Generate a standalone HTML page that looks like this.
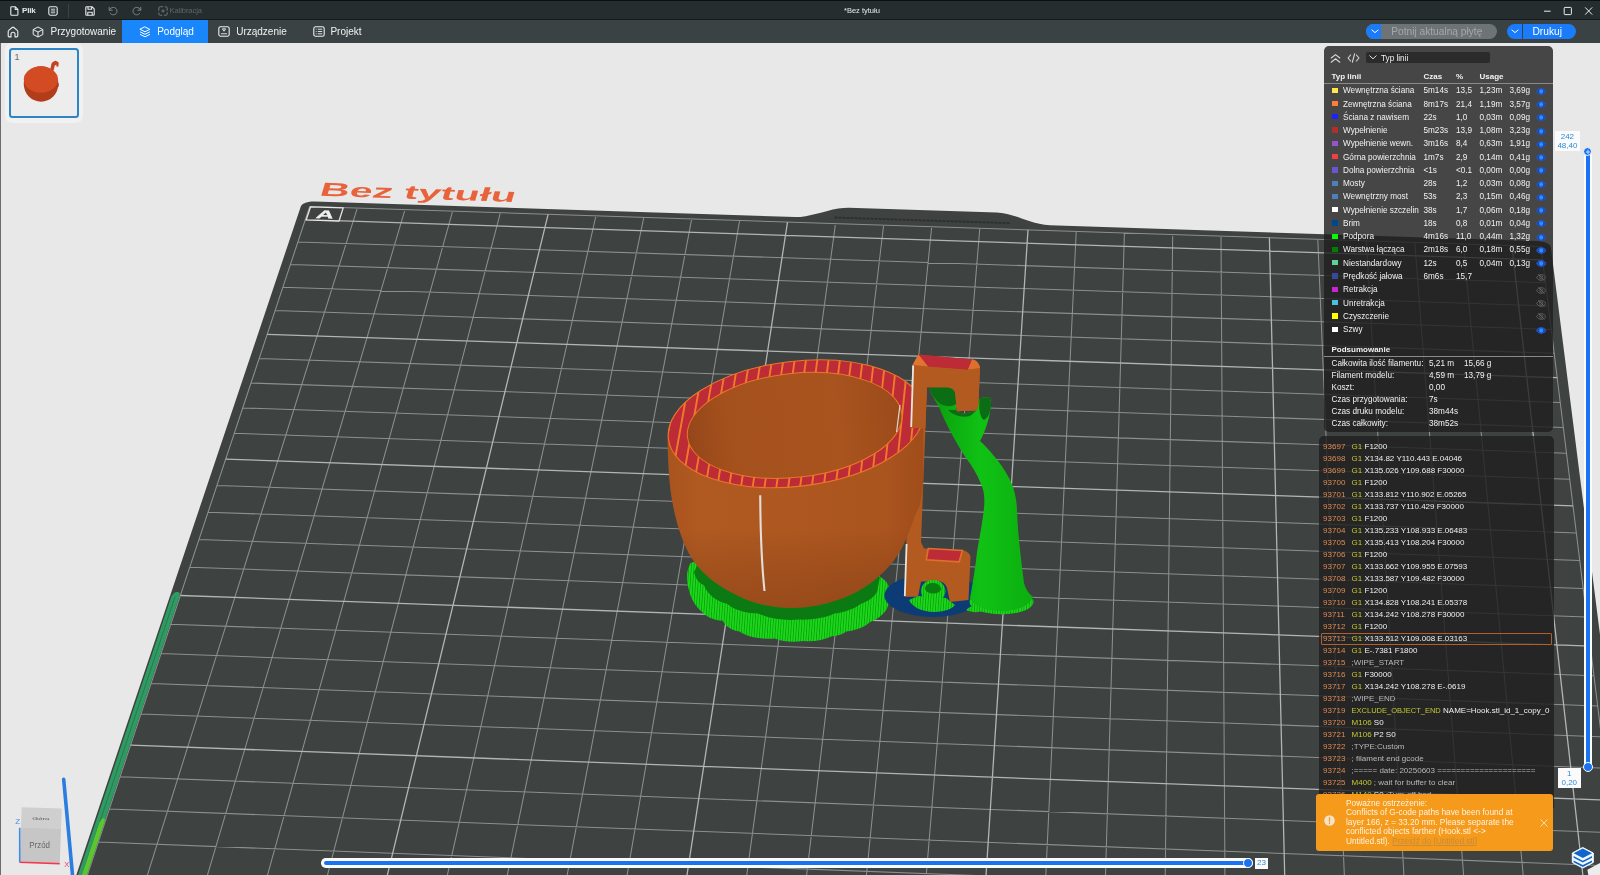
<!DOCTYPE html>
<html lang="pl"><head><meta charset="utf-8"><title>Bez tytułu</title>
<style>
*{box-sizing:border-box}
html,body{margin:0;padding:0}
body{-webkit-font-smoothing:antialiased;width:1600px;height:875px;overflow:hidden;position:relative;background:#e8e8e8;font-family:"Liberation Sans","DejaVu Sans",sans-serif;color:#fff}
#titlebar{position:absolute;left:0;top:0;width:1600px;height:20px;background:#262d2f;border-top:1px solid #0c1012;border-bottom:1px solid #13191b}
#tabbar{position:absolute;left:0;top:20px;width:1600px;height:22.6px;background:#3b4244}
#scene{position:absolute;left:0;top:42px}
.abs{position:absolute}
.tb-t{position:absolute;top:5px;font-size:8px;line-height:10px;color:#e8eaeb;white-space:nowrap}
.tab-t{position:absolute;top:6px;font-size:10px;line-height:12px;color:#f1f2f2;white-space:nowrap}

#legend{position:absolute;left:1324.2px;top:45.7px;width:229.3px;height:385.5px;background:rgba(30,30,30,0.805);border-radius:5px;overflow:hidden}
#legend .lt{position:absolute;font-size:8.2px;line-height:11px;color:#f2f2f2;white-space:nowrap}
#legend .lt.b{font-weight:bold;font-size:8px}
#legend .sw{left:8px;width:5.6px;height:5.4px}
#legend .eye{display:block;width:10.4px;height:7px}
#gcode{position:absolute;left:1318.5px;top:436.2px;width:234.7px;height:375px;background:rgba(30,30,30,0.805);border-radius:5px;overflow:hidden}
#gcode .gl{position:absolute;left:1.6px;width:231px;height:12px;font-size:8px;line-height:12px;white-space:pre;color:#f0f0f0;padding-left:2.5px}
#gcode .gl.hl{border:1px solid #b0602c;line-height:10px;padding-left:1.5px;border-radius:1px}
#gcode .gn{display:inline-block;width:28.5px;color:#e08a52}
#gcode .gc{color:#c4c832}
#gcode .gx{font-size:7.5px}
#gcode .ga{color:#f0f0f0}
#gcode .gm{color:#b8b8b8}
#warn{position:absolute;left:1316px;top:794px;width:237px;height:57px;background:#f59a1a;border-radius:3px}
#warn .wt{position:absolute;left:30px;top:4.5px;font-size:8.3px;line-height:9.5px;color:#fff3df;white-space:nowrap}
#warn .wt u{color:#c58b3e}
.sl{background:#fbfbfb;color:#2b8ad6;font-size:8px;line-height:9.8px;text-align:center;white-space:nowrap;padding-top:0.5px}
#titlebar,#tabbar,#legend,#gcode,#warn,.sl{will-change:transform}
</style></head>
<body>
<div id="titlebar">
<svg class="abs" style="left:10px;top:4.5px" width="9" height="10" viewBox="0 0 9 10"><path d="M1.6 0.8H5.4L7.9 3.3V8.4Q7.9 9.2 7.1 9.2H1.6Q0.8 9.2 0.8 8.4V1.6Q0.8 0.8 1.6 0.8ZM5.2 0.9V3.5H7.8" fill="none" stroke="#e9ebec" stroke-width="1.1" stroke-linejoin="round"/></svg>
<span class="tb-t" style="left:22px;font-weight:bold;letter-spacing:-0.2px">Plik</span>
<svg class="abs" style="left:47.6px;top:5px" width="10" height="10" viewBox="0 0 10 10"><rect x="0.8" y="0.8" width="8.4" height="8.4" rx="1.6" fill="none" stroke="#e9ebec" stroke-width="1.1"/><path d="M2.8 3.2H7.2M2.8 5H7.2M2.8 6.8H7.2" stroke="#e9ebec" stroke-width="0.9"/></svg>
<div class="abs" style="left:67.5px;top:3px;width:1px;height:14px;background:#3c4245"></div>
<svg class="abs" style="left:84.5px;top:5px" width="10" height="10" viewBox="0 0 10 10"><path d="M1.6 0.8H7.2L9.2 2.8V8.4Q9.2 9.2 8.4 9.2H1.6Q0.8 9.2 0.8 8.4V1.6Q0.8 0.8 1.6 0.8ZM3 0.9V3.3H6.6V0.9M2.8 9V6.2H7.2V9" fill="none" stroke="#e9ebec" stroke-width="1.1" stroke-linejoin="round"/></svg>
<svg class="abs" style="left:108px;top:4.5px" width="10" height="10" viewBox="0 0 10 10"><path d="M1.2 1.2V4.2H4.2M1.5 4C2.2 2.3 3.6 1.4 5.3 1.4C7.5 1.4 9 3 9 5.1C9 7.200000000000001 7.4 8.8 5.3 8.8C4 8.8 2.9 8.2 2.2 7.2" fill="none" stroke="#7c8387" stroke-width="1" stroke-linecap="round" stroke-linejoin="round"/></svg>
<svg class="abs" style="left:132px;top:4.5px" width="10" height="10" viewBox="0 0 10 10"><path d="M8.8 1.2V4.2H5.8M8.5 4C7.8 2.3 6.4 1.4 4.7 1.4C2.5 1.4 1 3 1 5.1C1 7.2 2.6 8.8 4.7 8.8C6 8.8 7.1 8.2 7.8 7.2" fill="none" stroke="#7c8387" stroke-width="1" stroke-linecap="round" stroke-linejoin="round"/></svg>
<svg class="abs" style="left:157.5px;top:5px" width="10" height="10" viewBox="0 0 10 10"><rect x="0.8" y="0.8" width="8.4" height="8.4" rx="1.8" fill="none" stroke="#6a7175" stroke-width="1.1" stroke-dasharray="5.2 1.6" stroke-dashoffset="2.6"/><path d="M3.2 5H6.8M5 3.2V6.8" stroke="#6a7175" stroke-width="1"/></svg>
<span class="tb-t" style="left:169.5px;color:#5f666a;font-size:7.6px;letter-spacing:-0.1px">Kalibracja</span>
<span class="tb-t" style="left:844px;font-size:7.5px">*Bez tytułu</span>
<svg class="abs" style="left:1543px;top:5px" width="50" height="10" viewBox="0 0 50 10"><path d="M1 5.2H7.6" stroke="#eceeef" stroke-width="1"/><rect x="21.2" y="1.4" width="7.2" height="7.2" rx="0.8" fill="none" stroke="#eceeef" stroke-width="1"/><path d="M42.2 1.4L49.2 8.6M49.2 1.4L42.2 8.6" stroke="#eceeef" stroke-width="1"/></svg>
</div>
<div id="tabbar">
<div class="abs" style="left:122.4px;top:0;width:86px;height:22.5px;background:#1a86fb"></div>
<svg class="abs" style="left:7px;top:5.8px" width="12" height="12" viewBox="0 0 12 12"><path d="M1.2 5.6C1.2 5 1.5 4.5 2 4.1L5.2 1.5C5.7 1.1 6.3 1.1 6.8 1.5L10 4.1C10.500000000000002 4.5 10.8 5 10.8 5.6V9.7C10.8 10.399999999999999 10.3 10.9 9.6 10.9H8V8.2C8 7.1 7.1 6.2 6 6.2S4 7.1 4 8.2V10.9H2.4C1.7 10.9 1.2 10.4 1.2 9.7Z" fill="none" stroke="#eef0f0" stroke-width="1.1" stroke-linejoin="round"/></svg>
<svg class="abs" style="left:32.2px;top:5.8px" width="12" height="12" viewBox="0 0 12 12"><path d="M6 1L10.8 3.5V8.5L6 11L1.2 8.5V3.5ZM1.3 3.6L6 6.1L10.7 3.6M6 6.1V11" fill="none" stroke="#eef0f0" stroke-width="1" stroke-linejoin="round"/></svg>
<span class="tab-t" style="left:50.6px">Przygotowanie</span>
<svg class="abs" style="left:138.6px;top:5.8px" width="12" height="12" viewBox="0 0 12 12"><path d="M6 1L10.8 3.4L6 5.8L1.2 3.4ZM1.4 6L6 8.3L10.6 6M1.4 8.5L6 10.8L10.6 8.5" fill="none" stroke="#fff" stroke-width="1" stroke-linejoin="round" stroke-linecap="round"/></svg>
<span class="tab-t" style="left:157.2px;color:#fff">Podgląd</span>
<svg class="abs" style="left:218px;top:6.3px" width="12" height="11" viewBox="0 0 12 11"><rect x="0.8" y="0.8" width="10.4" height="9.4" rx="1.6" fill="none" stroke="#eef0f0" stroke-width="1.1"/><path d="M3 7.8H9M4.4 2.8H7.6L6 5.2Z" fill="none" stroke="#eef0f0" stroke-width="0.9" stroke-linejoin="round"/></svg>
<span class="tab-t" style="left:236.2px">Urządzenie</span>
<svg class="abs" style="left:312.5px;top:6.3px" width="12" height="11" viewBox="0 0 12 11"><rect x="0.8" y="0.8" width="10.4" height="9.4" rx="1.8" fill="none" stroke="#eef0f0" stroke-width="1.1"/><path d="M2.8 3.2H3.6M2.8 5.5H3.6M2.8 7.8H3.6M4.8 3.2H9.2M4.8 5.5H9.2M4.8 7.8H9.2" stroke="#eef0f0" stroke-width="0.9"/></svg>
<span class="tab-t" style="left:330.4px">Projekt</span>
<!-- slice -->
<div class="abs" style="left:1366.2px;top:4.4px;width:131px;height:15px;background:#6d7376;border-radius:7.5px"></div>
<div class="abs" style="left:1366.2px;top:4.4px;width:15px;height:15px;background:#1a7cfa;border-radius:7.5px 0 0 7.5px"></div>
<svg class="abs" style="left:1370.5px;top:9.4px" width="8" height="5" viewBox="0 0 8 5"><path d="M0.9 1L4 3.6L7.1 1" fill="none" stroke="#fff" stroke-width="1" stroke-linecap="round" stroke-linejoin="round"/></svg>
<span class="tab-t" style="left:1391.2px;color:#a4a9ab;font-size:10.2px">Potnij aktualną płytę</span>
<!-- print -->
<div class="abs" style="left:1507px;top:4.4px;width:69.3px;height:15px;background:#1a7cfa;border-radius:7.5px"></div>
<div class="abs" style="left:1522.4px;top:4.4px;width:0.7px;height:15px;background:#3a4043"></div>
<svg class="abs" style="left:1511.3px;top:9.4px" width="8" height="5" viewBox="0 0 8 5"><path d="M0.9 1L4 3.6L7.1 1" fill="none" stroke="#fff" stroke-width="1" stroke-linecap="round" stroke-linejoin="round"/></svg>
<span class="tab-t" style="left:1532.5px;color:#fff;font-size:10.2px">Drukuj</span>
</div>
<svg id="scene" width="1600" height="833" viewBox="0 0 1600 833">
<polygon fill="#3e4241" points="62.4,874.5 300.8,164.5 301.7,163.1 303.3,161.8 305.6,160.7 308.4,160.0 311.4,159.5 314.5,159.4 795.1,175.0 800.3,174.9 805.7,174.2 811.1,173.1 816.5,171.8 821.9,170.4 827.4,168.9 832.8,167.6 838.2,166.6 843.5,165.9 848.7,165.8 996.5,170.5 1001.8,171.0 1007.2,172.0 1012.5,173.4 1017.8,175.1 1023.1,176.9 1028.5,178.7 1033.8,180.4 1039.2,181.8 1044.5,182.8 1050.0,183.3 1537.9,199.1 1541.1,199.4 1544.1,200.0 1546.7,201.0 1548.8,202.2 1550.2,203.6 1550.8,205.0 1643.5,935.8"/>
<polyline fill="none" stroke="#2c2f2f" stroke-width="1.8" stroke-dasharray="3 1" points="834.5,175.5 1010.6,181.2"/>
<path fill="none" stroke="#8c8f8f" stroke-width="1.05" d="M72.3,878.4L309.7,164.5M75.8,868.0L1630.3,928.2M132.4,880.8L357.3,166.1M87.2,833.7L1625.9,892.8M192.6,883.1L405.0,167.6M98.4,800.1L1621.6,858.1M252.9,885.4L452.6,169.2M109.3,767.1L1617.4,824.1M313.2,887.8L500.4,170.7M120.1,734.8L1613.3,790.8M434.0,892.5L595.9,173.8M141.0,672.0L1605.4,726.2M494.5,894.8L643.8,175.4M151.1,641.5L1601.5,694.8M555.0,897.2L691.7,176.9M161.0,611.6L1597.7,664.0M615.7,899.5L739.6,178.5M170.8,582.3L1594.0,633.8M737.1,904.2L835.5,181.6M189.8,525.2L1586.7,575.0M797.9,906.6L883.6,183.2M199.0,497.5L1583.2,546.5M858.8,909.0L931.7,184.7M208.1,470.2L1579.7,518.4M919.8,911.3L979.8,186.3M217.0,443.4L1576.3,490.9M1041.9,916.1L1076.2,189.4M234.3,391.3L1569.7,437.3M1103.0,918.4L1124.4,191.0M242.8,365.9L1566.5,411.2M1164.2,920.8L1172.7,192.6M251.0,341.0L1563.4,385.6M1225.5,923.2L1221.0,194.1M259.2,316.4L1560.2,360.4M1348.3,927.9L1317.8,197.3M275.1,268.6L1554.2,311.3M1409.7,930.3L1366.3,198.8M282.8,245.3L1551.2,287.4M1471.3,932.7L1414.8,200.4M290.5,222.4L1548.3,263.9M1532.9,935.1L1463.3,202.0M298.0,199.9L1545.5,240.7M1631.6,938.9L1541.0,204.5M309.7,164.5L1541.0,204.5"/>
<path fill="none" stroke="#b2b5b5" stroke-width="1.3" d="M373.5,890.1L548.1,172.3M130.6,703.1L1609.3,758.2M676.4,901.9L787.5,180.1M180.4,553.5L1590.3,604.1M980.8,913.7L1028.0,187.9M225.7,417.1L1573.0,463.9M1286.9,925.6L1269.4,195.7M267.2,292.3L1557.2,335.7M1594.6,937.5L1511.9,203.6M305.3,177.7L1542.7,218.0"/>
<polygon fill="#2f9b63" points="61.7,881.6 171.8,553.2 172.6,553.2 173.0,552.3 173.6,551.5 174.4,550.8 175.4,550.3 176.3,550.0 177.3,549.9 178.2,550.1 178.9,550.4 179.5,551.0 179.8,551.7 179.9,552.6 179.7,553.5 179.7,553.5 70.4,881.9"/>
<polyline fill="none" stroke="#27794f" stroke-width="1" points="175.1,554.7 65.9,881.7"/>
<polygon fill="#5cc62f" points="65.6,881.7 99.6,780.0 100.1,780.0 100.5,779.0 101.0,778.1 101.7,777.3 102.3,776.6 103.0,776.3 103.6,776.2 104.1,776.3 104.5,776.7 104.7,777.4 104.8,778.2 104.7,779.2 104.4,780.2 104.4,780.2 70.6,881.9"/>
<polygon fill="#3e4241" stroke="#e6e6e6" stroke-width="1.3" stroke-linejoin="round" points="310.6,164.8 343.2,165.9 339.0,179.0 306.2,177.9"/>
<text transform="matrix(4.751 0.1538 -0.6436 2.1685 318.6 153.7)" font-family="Liberation Sans, sans-serif" font-weight="bold" font-size="8.7" textLength="41.2" lengthAdjust="spacingAndGlyphs" fill="#e8633b">Bez tytułu</text>
<text transform="matrix(4.775 0.1553 -0.7156 2.1932 315.3 176.0)" font-family="Liberation Sans, sans-serif" font-weight="bold" font-size="5.1" textLength="3.7" lengthAdjust="spacingAndGlyphs" fill="#f0f0f0" stroke="#f0f0f0" stroke-width="0.12">A</text>
<defs>
<pattern id="rimp" width="11.6" height="40" patternUnits="userSpaceOnUse" patternTransform="translate(3,0) skewX(-16)"><rect width="11.6" height="40" fill="#bd2b36"/><rect width="1.9" height="40" fill="#ee7b2a"/></pattern>
<pattern id="sup" width="2.6" height="30" patternUnits="userSpaceOnUse" patternTransform="skewX(-4)"><rect width="2.6" height="30" fill="#1cd81c"/><rect width="0.9" height="30" fill="#0ba40b"/></pattern>
<linearGradient id="bodyg" x1="0" y1="0" x2="1" y2="0"><stop offset="0" stop-color="#a9531e"/><stop offset="0.12" stop-color="#b05921"/><stop offset="0.5" stop-color="#ae5720"/><stop offset="0.85" stop-color="#aa541e"/><stop offset="1" stop-color="#a04d1b"/></linearGradient>
<linearGradient id="bodyv" x1="0" y1="0" x2="0" y2="1"><stop offset="0" stop-color="#000" stop-opacity="0"/><stop offset="0.6" stop-color="#000" stop-opacity="0"/><stop offset="1" stop-color="#3a1200" stop-opacity="0.18"/></linearGradient>
<linearGradient id="ing" x1="0" y1="0" x2="1" y2="0"><stop offset="0" stop-color="#954619"/><stop offset="0.2" stop-color="#a5511d"/><stop offset="0.7" stop-color="#a9541f"/><stop offset="1" stop-color="#9b4a1a"/></linearGradient>
<linearGradient id="treeg" x1="0" y1="0" x2="1" y2="0"><stop offset="0" stop-color="#0a9c0e"/><stop offset="0.5" stop-color="#10c214"/><stop offset="1" stop-color="#0cae10"/></linearGradient>
<g id="hook">
<path fill="#b35a20" d="M912.8 364.8L968 369.6L980 368L978.4 404C978 408 977 410 976 410.4L956.8 411.2L955.2 392.8C954 389 951 387.500 947.200 387.2L927 387.2L921 542L924 548.5L964.3 550.5C968 552 970 554 970.5 556.7L968.5 599.9L950 602L946.9 587.5C945 583.500 943 581.800 939.700 581.4H921L918 596.8H904.3Z"/>
<path fill="#bd2b36" d="M918.4 354.4L972 359.5L968 369.6L928 366.4Z"/>
<path fill="#e27430" d="M918.4 354.4L912.8 364.8L928 366.4Z"/>
<path fill="#de6f2c" d="M972 359.500C976 360 979 363 980 368L968 369.6Z"/>
<path fill="#bd2b36" d="M928.3 548.5L962.3 550.5L959.2 561.8L926.3 559.8Z"/>
<path fill="none" stroke="#de6f2c" stroke-width="1.6" d="M928.3 548.5L962.3 550.5L959.2 561.8L926.3 559.8Z"/>
<path fill="url(#sup)" d="M921 590C922 583 928 579.500 934 580C941 580.500 945 585 945.500 591C945 598 940 602 932 601.5C925 601 921 597 921 590Z"/>
<path fill="#0b7d10" d="M925 588C926 584.500 930 582.500 934 583C938 583.500 941 586 941 589.500C940 592.500 936 594 932 593.500C928 593 925 591 925 588Z"/>
<path stroke="#e8e4e0" stroke-width="1.8" fill="none" d="M913.2 365.5L911.2 427M906.6 544L904.8 596"/>
</g>
<clipPath id="hooktop"><rect x="900" y="340" width="100" height="88"/></clipPath>
<clipPath id="rimc"><ellipse rx="128.6" ry="62.5" transform="translate(796.1,423.8) rotate(-6.7)"/></clipPath>
</defs>
<g transform="translate(0,-42)">
<!-- support base under cup -->
<path fill="url(#sup)" d="M690.5 563C686.500 570 686 580 688.3 587.5C690 597 695 606 701.4 611.3C706 617 714 620.500 722.8 620.8C726 627 732 630.500 739.4 631.4C748 637 761 639.500 775 638.6C783 642 794 642.500 803.5 641C813 642 824 640 832 636.2C838 636 843 634 846.3 631.4C856 630.500 865 627 870 622C878 619 884 614 886.7 608.9C890 602 890.500 594 889 587.5C888 583 885 580 881.9 578L860 560H700Z"/>
<path fill="#0b7a12" d="M694 572C696 580 699 583 703.8 585C708 595 716 601 727.5 604C734 610 745 613 758.4 613.6C770 619 786 621 798.8 619.6C812 620 825 618 834.4 613.6C845 612 854 609 860.5 604C868 601.500 874 597 877 592L880 577L860 560H700Z"/>
<!-- navy brim under hook -->
<ellipse cx="933" cy="595.5" rx="48.5" ry="21.5" fill="#0c3b76"/>
<!-- tree base -->
<ellipse cx="1001.5" cy="602" rx="32" ry="12.3" fill="url(#sup)"/>
<!-- green bits under hook -->
<path fill="url(#sup)" d="M909 600C912 607 922 612 934 612C944 612 952 609 955 605L946 598L918 596Z"/>
<path fill="url(#sup)" d="M966 610C972 604 984 603 990 607C986 612 974 614 966 610Z"/>
<!-- tree trunk -->
<path fill="url(#treeg)" d="M929 389L947 385L957 392L956 410L962 414L976 411L980 398L990 397L991 404C990 418 985 432 980 441C988 448 1000 462 1008 476C1014 486 1017 500 1017 512C1018 535 1021 560 1024 583C1026 590 1029 594 1033 597C1030 606 1016 611 1001 611C986 611 973 606 970 598C972 588 975 570 977 552C979 540 982 526 984 508C985 498 984 490 981 484C977 474 972 466 966 458C958 446 948 428 942 414C938 404 932 396 929 389Z"/>
<path fill="#0b6e14" d="M929 389L947 385L957 392L956 404C950 408 942 406 938 402C934 398 931 393 929 389Z"/>
<path fill="#0b6e14" d="M980 398L990 397L991 404C991 412 988 418 984 420C980 418 978 408 980 398Z"/>
<path fill="#0b6e14" d="M948 410C954 416 962 418 970 416L976 411L962 414L956 410Z"/>
<use href="#hook"/>
<!-- cup body -->
<path fill="url(#bodyg)" d="M667.6 437C667.6 446 667.8 455 668.3 464.3C668.9 476 670 488 671.7 498.6C673.4 509 675.8 519 678.6 528.3C681.4 537 684.8 546 688.9 553.5C692.6 560 697 566 702.600 571.8C708.600 577.600 715 583 723.200 587.8C731 592.400 739 597 748.3 600.4C757.500 603.600 767 606 778.1 607.2C787 608.200 796 608.200 805.5 607.2C815 606 824 604.400 833 601.5C841 598.800 848.600 596 855.8 592.4C863 588.600 870 584 876.4 578.6C882 573.800 887.600 568.400 892.4 562.6C896.600 557 900.600 551 903.8 544.3C906.600 538 910 530 913 521.5C916 513 918.5 508 919.8 505.5C921.800 496 923 486 923.3 475.7V412Z"/>
<path fill="url(#bodyv)" d="M667.6 437C667.6 446 667.8 455 668.3 464.3C668.9 476 670 488 671.7 498.6C673.4 509 675.8 519 678.6 528.3C681.4 537 684.8 546 688.9 553.5C692.6 560 697 566 702.600 571.8C708.600 577.600 715 583 723.200 587.8C731 592.400 739 597 748.3 600.4C757.500 603.600 767 606 778.1 607.2C787 608.200 796 608.200 805.5 607.2C815 606 824 604.400 833 601.5C841 598.800 848.600 596 855.8 592.4C863 588.600 870 584 876.4 578.6C882 573.800 887.600 568.400 892.4 562.6C896.600 557 900.600 551 903.8 544.3C906.600 538 910 530 913 521.5C916 513 918.5 508 919.8 505.5C921.800 496 923 486 923.3 475.7V412Z"/>
<!-- rim + interior -->
<g transform="translate(796.1,423.8) rotate(-6.7)"><ellipse rx="128.6" ry="62.5" fill="#bd2b36"/></g>
<g clip-path="url(#rimc)"><path d="M626.9 350L596.3 500M638.1 350L608.2 500M649.4 350L620.1 500M660.7 350L631.9 500M672.0 350L643.8 500M683.3 350L655.7 500M694.6 350L667.6 500M705.8 350L679.5 500M717.1 350L691.3 500M728.4 350L703.2 500M739.7 350L715.1 500M751.0 350L727.0 500M762.3 350L738.9 500M773.5 350L750.7 500M784.8 350L762.6 500M796.1 350L774.5 500M807.4 350L786.4 500M818.7 350L798.3 500M829.9 350L810.1 500M841.2 350L822.0 500M852.5 350L833.9 500M863.8 350L845.8 500M875.1 350L857.6 500M886.4 350L869.5 500M897.6 350L881.4 500M908.9 350L893.3 500M920.2 350L905.2 500M931.5 350L917.0 500M942.8 350L928.9 500M954.1 350L940.8 500" stroke="#ee7b2a" stroke-width="1.9" fill="none"/></g>
<g transform="translate(796.1,423.8) rotate(-6.7)"><ellipse rx="128.6" ry="62.5" fill="none" stroke="#e9772a" stroke-width="1.1"/></g>
<g transform="translate(794.6,425.4) rotate(-6.2)"><ellipse rx="107.8" ry="52" fill="url(#ing)" stroke="#e9772a" stroke-width="1"/></g>
<g clip-path="url(#hooktop)"><use href="#hook"/></g>
<path stroke="#ddd8d2" stroke-width="1.2" fill="none" d="M900 405L896.6 432"/>
<path stroke="#e2deda" stroke-width="2.1" fill="none" d="M760.2 495.300C760.400 530 761.5 562 764.5 591"/>
</g>

</svg>
<!-- thumbnail -->
<div class="abs" style="left:5.3px;top:43.4px;width:77.3px;height:79.2px;background:#f1f1f1;border-radius:7px"></div>
<div class="abs" style="left:8.6px;top:47.6px;width:70px;height:70.2px;background:#ededed;border:2px solid #2c86c6;border-radius:3.5px"></div>
<span class="abs" style="left:14.4px;top:52px;font-size:9px;line-height:11px;color:#6b6b6b">1</span>
<svg class="abs" style="left:20px;top:58px" width="44" height="46" viewBox="20 58 44 46">
<path d="M50.300 69.500L51.400 63.800C52.500 62 54 61 55.900 60.800L58.700 62.600L58.400 66.400L56.600 66.800L56.300 64.800L54.800 65.400L53.600 70.400Z" fill="#c5441e"/>
<ellipse cx="41.05" cy="84" rx="17.3" ry="17.7" fill="#b23d1a"/>
<path d="M57.600 82.600L58.700 83.400L58.500 86.800L57.400 87.400Z" fill="#a63717"/>
<ellipse cx="40.9" cy="79.500" rx="17.100" ry="13.200" fill="#d24b23"/>
</svg>
<!-- vertical slider -->
<div class="abs" style="left:1584px;top:148px;width:8px;height:623px;background:#fbfbfb;border-radius:4px"></div>
<div class="abs" style="left:1585.6px;top:151px;width:4.4px;height:617px;background:#1a73f0;border-radius:2px"></div>
<div class="abs" style="left:1583.3px;top:147px;width:9px;height:9px;background:#1a73f0;border-radius:50%;border:0.6px solid #fbfbfb"></div>
<div class="abs" style="left:1582.6px;top:762.3px;width:10px;height:10px;background:#1a73f0;border-radius:50%;border:1px solid #fbfbfb"></div>
<svg class="abs" style="left:1584.8px;top:148.5px" width="6" height="6" viewBox="0 0 6 6"><path d="M3 0.8V5.200M0.8 3H5.200" stroke="#d9e8ff" stroke-width="0.9"/></svg>
<div class="abs sl" style="left:1555.2px;top:131px;width:24.8px;height:19.8px;">242<br>48,40</div>
<div class="abs sl" style="left:1557.7px;top:768px;width:22.5px;height:20px;">1<br>0,20</div>
<!-- horizontal slider -->
<div class="abs" style="left:321px;top:858.4px;width:932px;height:9.4px;background:#fbfbfb;border-radius:4.7px"></div>
<div class="abs" style="left:324px;top:861.1px;width:925px;height:4px;background:#1a73f0;border-radius:2px"></div>
<div class="abs" style="left:1242.600px;top:857.8px;width:10.6px;height:10.6px;background:#1a73f0;border-radius:50%;border:1px solid #fbfbfb"></div>
<div class="abs sl" style="left:1255.4px;top:857.6px;width:13.1px;height:10.9px;line-height:10.9px;padding-top:0">23</div>
<!-- left window edge -->
<div class="abs" style="left:0;top:42.5px;width:1px;height:833px;background:#6d6d6d"></div>
<!-- view cube -->
<svg class="abs" style="left:0;top:770px" width="90" height="105" viewBox="0 770 90 105">
<path d="M63.7 779.4L72.6 876" stroke="#2b7de0" stroke-width="3.6" stroke-linecap="round" fill="none"/>
<polygon points="21.7,807.3 61.8,808.6 61,828.6 21,827.7" fill="#cfcfcf"/>
<polygon points="21,827.7 61,828.6 59.8,862.4 19.7,861.8" fill="#c6c6c6"/>
<path d="M19.7 827.7V861.8" stroke="#3d8ce8" stroke-width="1.6" fill="none"/>
<path d="M19.4 862.3L59.8 863.6" stroke="#ee3b52" stroke-width="1.6" fill="none"/>
<text x="15.3" y="823.6" font-family="Liberation Sans, sans-serif" font-size="8" fill="#4a90e8">Z</text>
<text x="64.3" y="866.6" font-family="Liberation Sans, sans-serif" font-size="7.5" fill="#ee4458">X</text>
<text transform="translate(32.2 819.6) scale(1 0.55)" font-family="Liberation Sans, sans-serif" font-size="7" fill="#5a5a5a" textLength="17" lengthAdjust="spacingAndGlyphs">Góra</text>
<text x="29.2" y="848" font-family="Liberation Sans, sans-serif" font-size="8.6" fill="#666" textLength="20.8" lengthAdjust="spacingAndGlyphs">Przód</text>
</svg>
<!-- layers icon + corner -->
<svg class="abs" style="left:1568px;top:844px" width="32" height="31" viewBox="1568 844 32 31">
<polygon points="1587.4,869.7 1600,862.9 1600,875 1588.3,875" fill="#ededed"/>
<path d="M1582.800 847.500L1593.300 853V862.500L1582.800 868L1572.300 862.500V853Z" fill="#f4f9ff" stroke="#f4f9ff" stroke-width="1" stroke-linejoin="round"/>
<path d="M1582.800 848.600L1592 853.300L1582.800 858L1573.600 853.300Z" fill="#1166cc"/>
<path d="M1573.600 856L1582.800 860.700L1592 856L1592 857.700L1582.800 862.400L1573.600 857.700Z" fill="#1166cc"/>
<path d="M1573.600 860.400L1582.800 865.100L1592 860.400L1592 862.200L1582.800 866.900L1573.600 862.200Z" fill="#1166cc"/>
</svg>
<div id="legend">
<svg class="abs" style="left:6px;top:7px" width="11" height="11" viewBox="0 0 11 11"><path d="M1.2 5L5.5 1.6L9.8 5M1.2 9.2L5.5 5.8L9.8 9.2" fill="none" stroke="#d8d8d8" stroke-width="1.1" stroke-linecap="round" stroke-linejoin="round"/></svg>
<svg class="abs" style="left:23px;top:7px" width="13" height="10" viewBox="0 0 13 10"><path d="M3.6 2L1 5L3.6 8M9.4 2L12 5L9.4 8M7.6 0.8L5.4 9.2" fill="none" stroke="#d8d8d8" stroke-width="1.1" stroke-linecap="round" stroke-linejoin="round"/></svg>
<div class="abs" style="left:42px;top:6px;width:124px;height:11px;background:#2b2b2b;border-radius:2px"></div>
<svg class="abs" style="left:45px;top:9px" width="8" height="5" viewBox="0 0 8 5"><path d="M0.8 0.8L4 3.8L7.2 0.8" fill="none" stroke="#e0e0e0" stroke-width="1" stroke-linecap="round" stroke-linejoin="round"/></svg>
<span class="lt" style="left:57px;top:6.5px">Typ linii</span>
<span class="lt b" style="left:7.5px;top:25px">Typ linii</span>
<span class="lt b" style="left:99.5px;top:25px">Czas</span>
<span class="lt b" style="left:132px;top:25px">%</span>
<span class="lt b" style="left:155.5px;top:25px">Usage</span>
<div class="abs" style="left:0;top:37px;width:229px;height:1px;background:#8a8a8a"></div>
<div class="abs sw" style="top:41.6px;background:#ffe64d"></div>
<span class="lt" style="left:19px;top:39.2px">Wewnętrzna ściana</span>
<span class="lt" style="left:99.5px;top:39.2px">5m14s</span>
<span class="lt" style="left:132px;top:39.2px">13,5</span>
<span class="lt" style="left:155.5px;top:39.2px">1,23m</span>
<span class="lt" style="left:185.5px;top:39.2px">3,69g</span>
<div class="abs" style="left:211.8px;top:41.7px;width:10.4px;height:7px"><svg class="eye" viewBox="0 0 12 8"><path d="M0.7 4C2.3 1.5 4 0.7 6 0.7S9.7 1.5 11.3 4C9.7 6.5 8 7.3 6 7.3S2.3 6.5 0.7 4Z" fill="#173f9c" stroke="#1f57d0" stroke-width="1.3" stroke-linejoin="round"/><circle cx="6" cy="4" r="2.5" fill="#2f8bff"/></svg></div>
<div class="abs sw" style="top:54.9px;background:#ff7d38"></div>
<span class="lt" style="left:19px;top:52.5px">Zewnętrzna ściana</span>
<span class="lt" style="left:99.5px;top:52.5px">8m17s</span>
<span class="lt" style="left:132px;top:52.5px">21,4</span>
<span class="lt" style="left:155.5px;top:52.5px">1,19m</span>
<span class="lt" style="left:185.5px;top:52.5px">3,57g</span>
<div class="abs" style="left:211.8px;top:55.0px;width:10.4px;height:7px"><svg class="eye" viewBox="0 0 12 8"><path d="M0.7 4C2.3 1.5 4 0.7 6 0.7S9.7 1.5 11.3 4C9.7 6.5 8 7.3 6 7.3S2.3 6.5 0.7 4Z" fill="#173f9c" stroke="#1f57d0" stroke-width="1.3" stroke-linejoin="round"/><circle cx="6" cy="4" r="2.5" fill="#2f8bff"/></svg></div>
<div class="abs sw" style="top:68.1px;background:#1f1fff"></div>
<span class="lt" style="left:19px;top:65.7px">Ściana z nawisem</span>
<span class="lt" style="left:99.5px;top:65.7px">22s</span>
<span class="lt" style="left:132px;top:65.7px">1,0</span>
<span class="lt" style="left:155.5px;top:65.7px">0,03m</span>
<span class="lt" style="left:185.5px;top:65.7px">0,09g</span>
<div class="abs" style="left:211.8px;top:68.2px;width:10.4px;height:7px"><svg class="eye" viewBox="0 0 12 8"><path d="M0.7 4C2.3 1.5 4 0.7 6 0.7S9.7 1.5 11.3 4C9.7 6.5 8 7.3 6 7.3S2.3 6.5 0.7 4Z" fill="#173f9c" stroke="#1f57d0" stroke-width="1.3" stroke-linejoin="round"/><circle cx="6" cy="4" r="2.5" fill="#2f8bff"/></svg></div>
<div class="abs sw" style="top:81.4px;background:#b03029"></div>
<span class="lt" style="left:19px;top:79.0px">Wypełnienie</span>
<span class="lt" style="left:99.5px;top:79.0px">5m23s</span>
<span class="lt" style="left:132px;top:79.0px">13,9</span>
<span class="lt" style="left:155.5px;top:79.0px">1,08m</span>
<span class="lt" style="left:185.5px;top:79.0px">3,23g</span>
<div class="abs" style="left:211.8px;top:81.5px;width:10.4px;height:7px"><svg class="eye" viewBox="0 0 12 8"><path d="M0.7 4C2.3 1.5 4 0.7 6 0.7S9.7 1.5 11.3 4C9.7 6.5 8 7.3 6 7.3S2.3 6.5 0.7 4Z" fill="#173f9c" stroke="#1f57d0" stroke-width="1.3" stroke-linejoin="round"/><circle cx="6" cy="4" r="2.5" fill="#2f8bff"/></svg></div>
<div class="abs sw" style="top:94.7px;background:#9654cc"></div>
<span class="lt" style="left:19px;top:92.3px">Wypełnienie wewn.</span>
<span class="lt" style="left:99.5px;top:92.3px">3m16s</span>
<span class="lt" style="left:132px;top:92.3px">8,4</span>
<span class="lt" style="left:155.5px;top:92.3px">0,63m</span>
<span class="lt" style="left:185.5px;top:92.3px">1,91g</span>
<div class="abs" style="left:211.8px;top:94.8px;width:10.4px;height:7px"><svg class="eye" viewBox="0 0 12 8"><path d="M0.7 4C2.3 1.5 4 0.7 6 0.7S9.7 1.5 11.3 4C9.7 6.5 8 7.3 6 7.3S2.3 6.5 0.7 4Z" fill="#173f9c" stroke="#1f57d0" stroke-width="1.3" stroke-linejoin="round"/><circle cx="6" cy="4" r="2.5" fill="#2f8bff"/></svg></div>
<div class="abs sw" style="top:107.9px;background:#f04040"></div>
<span class="lt" style="left:19px;top:105.5px">Górna powierzchnia</span>
<span class="lt" style="left:99.5px;top:105.5px">1m7s</span>
<span class="lt" style="left:132px;top:105.5px">2,9</span>
<span class="lt" style="left:155.5px;top:105.5px">0,14m</span>
<span class="lt" style="left:185.5px;top:105.5px">0,41g</span>
<div class="abs" style="left:211.8px;top:108.0px;width:10.4px;height:7px"><svg class="eye" viewBox="0 0 12 8"><path d="M0.7 4C2.3 1.5 4 0.7 6 0.7S9.7 1.5 11.3 4C9.7 6.5 8 7.3 6 7.3S2.3 6.5 0.7 4Z" fill="#173f9c" stroke="#1f57d0" stroke-width="1.3" stroke-linejoin="round"/><circle cx="6" cy="4" r="2.5" fill="#2f8bff"/></svg></div>
<div class="abs sw" style="top:121.2px;background:#6657d1"></div>
<span class="lt" style="left:19px;top:118.8px">Dolna powierzchnia</span>
<span class="lt" style="left:99.5px;top:118.8px">&lt;1s</span>
<span class="lt" style="left:132px;top:118.8px">&lt;0.1</span>
<span class="lt" style="left:155.5px;top:118.8px">0,00m</span>
<span class="lt" style="left:185.5px;top:118.8px">0,00g</span>
<div class="abs" style="left:211.8px;top:121.3px;width:10.4px;height:7px"><svg class="eye" viewBox="0 0 12 8"><path d="M0.7 4C2.3 1.5 4 0.7 6 0.7S9.7 1.5 11.3 4C9.7 6.5 8 7.3 6 7.3S2.3 6.5 0.7 4Z" fill="#173f9c" stroke="#1f57d0" stroke-width="1.3" stroke-linejoin="round"/><circle cx="6" cy="4" r="2.5" fill="#2f8bff"/></svg></div>
<div class="abs sw" style="top:134.5px;background:#4d80ba"></div>
<span class="lt" style="left:19px;top:132.1px">Mosty</span>
<span class="lt" style="left:99.5px;top:132.1px">28s</span>
<span class="lt" style="left:132px;top:132.1px">1,2</span>
<span class="lt" style="left:155.5px;top:132.1px">0,03m</span>
<span class="lt" style="left:185.5px;top:132.1px">0,08g</span>
<div class="abs" style="left:211.8px;top:134.6px;width:10.4px;height:7px"><svg class="eye" viewBox="0 0 12 8"><path d="M0.7 4C2.3 1.5 4 0.7 6 0.7S9.7 1.5 11.3 4C9.7 6.5 8 7.3 6 7.3S2.3 6.5 0.7 4Z" fill="#173f9c" stroke="#1f57d0" stroke-width="1.3" stroke-linejoin="round"/><circle cx="6" cy="4" r="2.5" fill="#2f8bff"/></svg></div>
<div class="abs sw" style="top:147.8px;background:#4d80ba"></div>
<span class="lt" style="left:19px;top:145.4px">Wewnętrzny most</span>
<span class="lt" style="left:99.5px;top:145.4px">53s</span>
<span class="lt" style="left:132px;top:145.4px">2,3</span>
<span class="lt" style="left:155.5px;top:145.4px">0,15m</span>
<span class="lt" style="left:185.5px;top:145.4px">0,46g</span>
<div class="abs" style="left:211.8px;top:147.9px;width:10.4px;height:7px"><svg class="eye" viewBox="0 0 12 8"><path d="M0.7 4C2.3 1.5 4 0.7 6 0.7S9.7 1.5 11.3 4C9.7 6.5 8 7.3 6 7.3S2.3 6.5 0.7 4Z" fill="#173f9c" stroke="#1f57d0" stroke-width="1.3" stroke-linejoin="round"/><circle cx="6" cy="4" r="2.5" fill="#2f8bff"/></svg></div>
<div class="abs sw" style="top:161.0px;background:#ffffff"></div>
<span class="lt" style="left:19px;top:158.6px">Wypełnienie szczelin</span>
<span class="lt" style="left:99.5px;top:158.6px">38s</span>
<span class="lt" style="left:132px;top:158.6px">1,7</span>
<span class="lt" style="left:155.5px;top:158.6px">0,06m</span>
<span class="lt" style="left:185.5px;top:158.6px">0,18g</span>
<div class="abs" style="left:211.8px;top:161.1px;width:10.4px;height:7px"><svg class="eye" viewBox="0 0 12 8"><path d="M0.7 4C2.3 1.5 4 0.7 6 0.7S9.7 1.5 11.3 4C9.7 6.5 8 7.3 6 7.3S2.3 6.5 0.7 4Z" fill="#173f9c" stroke="#1f57d0" stroke-width="1.3" stroke-linejoin="round"/><circle cx="6" cy="4" r="2.5" fill="#2f8bff"/></svg></div>
<div class="abs sw" style="top:174.3px;background:#00468c"></div>
<span class="lt" style="left:19px;top:171.9px">Brim</span>
<span class="lt" style="left:99.5px;top:171.9px">18s</span>
<span class="lt" style="left:132px;top:171.9px">0,8</span>
<span class="lt" style="left:155.5px;top:171.9px">0,01m</span>
<span class="lt" style="left:185.5px;top:171.9px">0,04g</span>
<div class="abs" style="left:211.8px;top:174.4px;width:10.4px;height:7px"><svg class="eye" viewBox="0 0 12 8"><path d="M0.7 4C2.3 1.5 4 0.7 6 0.7S9.7 1.5 11.3 4C9.7 6.5 8 7.3 6 7.3S2.3 6.5 0.7 4Z" fill="#173f9c" stroke="#1f57d0" stroke-width="1.3" stroke-linejoin="round"/><circle cx="6" cy="4" r="2.5" fill="#2f8bff"/></svg></div>
<div class="abs sw" style="top:187.6px;background:#00ff00"></div>
<span class="lt" style="left:19px;top:185.2px">Podpora</span>
<span class="lt" style="left:99.5px;top:185.2px">4m16s</span>
<span class="lt" style="left:132px;top:185.2px">11,0</span>
<span class="lt" style="left:155.5px;top:185.2px">0,44m</span>
<span class="lt" style="left:185.5px;top:185.2px">1,32g</span>
<div class="abs" style="left:211.8px;top:187.7px;width:10.4px;height:7px"><svg class="eye" viewBox="0 0 12 8"><path d="M0.7 4C2.3 1.5 4 0.7 6 0.7S9.7 1.5 11.3 4C9.7 6.5 8 7.3 6 7.3S2.3 6.5 0.7 4Z" fill="#173f9c" stroke="#1f57d0" stroke-width="1.3" stroke-linejoin="round"/><circle cx="6" cy="4" r="2.5" fill="#2f8bff"/></svg></div>
<div class="abs sw" style="top:200.8px;background:#008000"></div>
<span class="lt" style="left:19px;top:198.4px">Warstwa łącząca</span>
<span class="lt" style="left:99.5px;top:198.4px">2m18s</span>
<span class="lt" style="left:132px;top:198.4px">6,0</span>
<span class="lt" style="left:155.5px;top:198.4px">0,18m</span>
<span class="lt" style="left:185.5px;top:198.4px">0,55g</span>
<div class="abs" style="left:211.8px;top:200.9px;width:10.4px;height:7px"><svg class="eye" viewBox="0 0 12 8"><path d="M0.7 4C2.3 1.5 4 0.7 6 0.7S9.7 1.5 11.3 4C9.7 6.5 8 7.3 6 7.3S2.3 6.5 0.7 4Z" fill="#173f9c" stroke="#1f57d0" stroke-width="1.3" stroke-linejoin="round"/><circle cx="6" cy="4" r="2.5" fill="#2f8bff"/></svg></div>
<div class="abs sw" style="top:214.1px;background:#5ed194"></div>
<span class="lt" style="left:19px;top:211.7px">Niestandardowy</span>
<span class="lt" style="left:99.5px;top:211.7px">12s</span>
<span class="lt" style="left:132px;top:211.7px">0,5</span>
<span class="lt" style="left:155.5px;top:211.7px">0,04m</span>
<span class="lt" style="left:185.5px;top:211.7px">0,13g</span>
<div class="abs" style="left:211.8px;top:214.2px;width:10.4px;height:7px"><svg class="eye" viewBox="0 0 12 8"><path d="M0.7 4C2.3 1.5 4 0.7 6 0.7S9.7 1.5 11.3 4C9.7 6.5 8 7.3 6 7.3S2.3 6.5 0.7 4Z" fill="#173f9c" stroke="#1f57d0" stroke-width="1.3" stroke-linejoin="round"/><circle cx="6" cy="4" r="2.5" fill="#2f8bff"/></svg></div>
<div class="abs sw" style="top:227.4px;background:#38489b"></div>
<span class="lt" style="left:19px;top:225.0px">Prędkość jałowa</span>
<span class="lt" style="left:99.5px;top:225.0px">6m6s</span>
<span class="lt" style="left:132px;top:225.0px">15,7</span>
<div class="abs" style="left:211.8px;top:227.5px;width:10.4px;height:7px"><svg class="eye" viewBox="0 0 12 8"><path d="M0.7 4C2.3 1.5 4 0.7 6 0.7S9.7 1.5 11.3 4C9.7 6.5 8 7.3 6 7.3S2.3 6.5 0.7 4Z" fill="none" stroke="#6e6e6e" stroke-width="0.9"/><circle cx="6" cy="4" r="1.9" fill="none" stroke="#6e6e6e" stroke-width="0.9"/><path d="M2.6 0.3L9.800 7.700" stroke="#6e6e6e" stroke-width="0.9"/></svg></div>
<div class="abs sw" style="top:240.6px;background:#cd22d6"></div>
<span class="lt" style="left:19px;top:238.2px">Retrakcja</span>
<div class="abs" style="left:211.8px;top:240.7px;width:10.4px;height:7px"><svg class="eye" viewBox="0 0 12 8"><path d="M0.7 4C2.3 1.5 4 0.7 6 0.7S9.7 1.5 11.3 4C9.7 6.5 8 7.3 6 7.3S2.3 6.5 0.7 4Z" fill="none" stroke="#6e6e6e" stroke-width="0.9"/><circle cx="6" cy="4" r="1.9" fill="none" stroke="#6e6e6e" stroke-width="0.9"/><path d="M2.6 0.3L9.800 7.700" stroke="#6e6e6e" stroke-width="0.9"/></svg></div>
<div class="abs sw" style="top:253.9px;background:#4bbfdd"></div>
<span class="lt" style="left:19px;top:251.5px">Unretrakcja</span>
<div class="abs" style="left:211.8px;top:254.0px;width:10.4px;height:7px"><svg class="eye" viewBox="0 0 12 8"><path d="M0.7 4C2.3 1.5 4 0.7 6 0.7S9.7 1.5 11.3 4C9.7 6.5 8 7.3 6 7.3S2.3 6.5 0.7 4Z" fill="none" stroke="#6e6e6e" stroke-width="0.9"/><circle cx="6" cy="4" r="1.9" fill="none" stroke="#6e6e6e" stroke-width="0.9"/><path d="M2.6 0.3L9.800 7.700" stroke="#6e6e6e" stroke-width="0.9"/></svg></div>
<div class="abs sw" style="top:267.2px;background:#ffff00"></div>
<span class="lt" style="left:19px;top:264.8px">Czyszczenie</span>
<div class="abs" style="left:211.8px;top:267.3px;width:10.4px;height:7px"><svg class="eye" viewBox="0 0 12 8"><path d="M0.7 4C2.3 1.5 4 0.7 6 0.7S9.7 1.5 11.3 4C9.7 6.5 8 7.3 6 7.3S2.3 6.5 0.7 4Z" fill="none" stroke="#6e6e6e" stroke-width="0.9"/><circle cx="6" cy="4" r="1.9" fill="none" stroke="#6e6e6e" stroke-width="0.9"/><path d="M2.6 0.3L9.800 7.700" stroke="#6e6e6e" stroke-width="0.9"/></svg></div>
<div class="abs sw" style="top:280.5px;background:#ffffff"></div>
<span class="lt" style="left:19px;top:278.1px">Szwy</span>
<div class="abs" style="left:211.8px;top:280.6px;width:10.4px;height:7px"><svg class="eye" viewBox="0 0 12 8"><path d="M0.7 4C2.3 1.5 4 0.7 6 0.7S9.7 1.5 11.3 4C9.7 6.5 8 7.3 6 7.3S2.3 6.5 0.7 4Z" fill="#173f9c" stroke="#1f57d0" stroke-width="1.3" stroke-linejoin="round"/><circle cx="6" cy="4" r="2.5" fill="#2f8bff"/></svg></div>
<span class="lt b" style="left:7.5px;top:297.5px">Podsumowanie</span>
<div class="abs" style="left:0;top:309.5px;width:229px;height:1px;background:#8a8a8a"></div>
<span class="lt" style="left:7.5px;top:312.0px">Całkowita ilość filamentu:</span>
<span class="lt" style="left:105px;top:312.0px">5,21 m</span>
<span class="lt" style="left:140px;top:312.0px">15,66 g</span>
<span class="lt" style="left:7.5px;top:323.9px">Filament modelu:</span>
<span class="lt" style="left:105px;top:323.9px">4,59 m</span>
<span class="lt" style="left:140px;top:323.9px">13,79 g</span>
<span class="lt" style="left:7.5px;top:335.9px">Koszt:</span>
<span class="lt" style="left:105px;top:335.9px">0,00</span>
<span class="lt" style="left:7.5px;top:347.9px">Czas przygotowania:</span>
<span class="lt" style="left:105px;top:347.9px">7s</span>
<span class="lt" style="left:7.5px;top:359.8px">Czas druku modelu:</span>
<span class="lt" style="left:105px;top:359.8px">38m44s</span>
<span class="lt" style="left:7.5px;top:371.8px">Czas całkowity:</span>
<span class="lt" style="left:105px;top:371.8px">38m52s</span>
</div>
<div id="gcode">
<div class="gl" style="top:4.8px"><span class="gn">93697</span><span class="gc">G1</span> <span class="ga">F1200</span> </div>
<div class="gl" style="top:16.8px"><span class="gn">93698</span><span class="gc">G1</span> <span class="ga">X134.82 Y110.443 E.04046</span> </div>
<div class="gl" style="top:28.8px"><span class="gn">93699</span><span class="gc">G1</span> <span class="ga">X135.026 Y109.688 F30000</span> </div>
<div class="gl" style="top:40.8px"><span class="gn">93700</span><span class="gc">G1</span> <span class="ga">F1200</span> </div>
<div class="gl" style="top:52.8px"><span class="gn">93701</span><span class="gc">G1</span> <span class="ga">X133.812 Y110.902 E.05265</span> </div>
<div class="gl" style="top:64.8px"><span class="gn">93702</span><span class="gc">G1</span> <span class="ga">X133.737 Y110.429 F30000</span> </div>
<div class="gl" style="top:76.8px"><span class="gn">93703</span><span class="gc">G1</span> <span class="ga">F1200</span> </div>
<div class="gl" style="top:88.8px"><span class="gn">93704</span><span class="gc">G1</span> <span class="ga">X135.233 Y108.933 E.06483</span> </div>
<div class="gl" style="top:100.8px"><span class="gn">93705</span><span class="gc">G1</span> <span class="ga">X135.413 Y108.204 F30000</span> </div>
<div class="gl" style="top:112.8px"><span class="gn">93706</span><span class="gc">G1</span> <span class="ga">F1200</span> </div>
<div class="gl" style="top:124.8px"><span class="gn">93707</span><span class="gc">G1</span> <span class="ga">X133.662 Y109.955 E.07593</span> </div>
<div class="gl" style="top:136.8px"><span class="gn">93708</span><span class="gc">G1</span> <span class="ga">X133.587 Y109.482 F30000</span> </div>
<div class="gl" style="top:148.8px"><span class="gn">93709</span><span class="gc">G1</span> <span class="ga">F1200</span> </div>
<div class="gl" style="top:160.8px"><span class="gn">93710</span><span class="gc">G1</span> <span class="ga">X134.828 Y108.241 E.05378</span> </div>
<div class="gl" style="top:172.8px"><span class="gn">93711</span><span class="gc">G1</span> <span class="ga">X134.242 Y108.278 F30000</span> </div>
<div class="gl" style="top:184.8px"><span class="gn">93712</span><span class="gc">G1</span> <span class="ga">F1200</span> </div>
<div class="gl hl" style="top:196.8px"><span class="gn">93713</span><span class="gc">G1</span> <span class="ga">X133.512 Y109.008 E.03163</span> </div>
<div class="gl" style="top:208.8px"><span class="gn">93714</span><span class="gc">G1</span> <span class="ga">E-.7381 F1800</span> </div>
<div class="gl" style="top:220.8px"><span class="gn">93715</span><span class="gm">;WIPE_START</span> </div>
<div class="gl" style="top:232.8px"><span class="gn">93716</span><span class="gc">G1</span> <span class="ga">F30000</span> </div>
<div class="gl" style="top:244.8px"><span class="gn">93717</span><span class="gc">G1</span> <span class="ga">X134.242 Y108.278 E-.0619</span> </div>
<div class="gl" style="top:256.8px"><span class="gn">93718</span><span class="gm">;WIPE_END</span> </div>
<div class="gl" style="top:268.8px"><span class="gn">93719</span><span class="gc gx">EXCLUDE_OBJECT_END</span> <span class="ga">NAME=Hook.stl_id_1_copy_0</span> </div>
<div class="gl" style="top:280.8px"><span class="gn">93720</span><span class="gc">M106</span> <span class="ga">S0</span> </div>
<div class="gl" style="top:292.8px"><span class="gn">93721</span><span class="gc">M106</span> <span class="ga">P2 S0</span> </div>
<div class="gl" style="top:304.8px"><span class="gn">93722</span><span class="gm">;TYPE:Custom</span> </div>
<div class="gl" style="top:316.8px"><span class="gn">93723</span><span class="gm">; filament end gcode</span> </div>
<div class="gl" style="top:328.8px"><span class="gn">93724</span><span class="gm">;===== date: 20250603 =====================</span> </div>
<div class="gl" style="top:340.8px"><span class="gn">93725</span><span class="gc">M400</span> <span class="gm">; wait for buffer to clear</span> </div>
<div class="gl" style="top:352.8px"><span class="gn">93726</span><span class="gc">M140</span> <span class="ga">S0</span> <span class="gm">;Turn-off bed</span> </div>
</div>
<div id="warn">
<svg class="abs" style="left:7.5px;top:21px" width="11" height="11" viewBox="0 0 11 11"><circle cx="5.5" cy="5.5" r="5.3" fill="#f3e3c8"/><path d="M5.5 2.6V6.3M5.5 7.9V8.4" stroke="#f59a1a" stroke-width="1.2" stroke-linecap="round"/></svg>
<div class="wt">Poważne ostrzeżenie:<br>Conflicts of G-code paths have been found at<br>layer 166, z = 33.20 mm. Please separate the<br>conflicted objects farther (Hook.stl &lt;-&gt;<br>Untitled.stl). <u>Przejdź do [Untitled.stl]</u></div>
<svg class="abs" style="left:223.5px;top:24.5px" width="8" height="8" viewBox="0 0 8 8"><path d="M0.8 0.8L7.2 7.2M7.2 0.8L0.8 7.2" stroke="#fbe2b8" stroke-width="0.9" stroke-linecap="round"/></svg>
</div>
</body></html>
